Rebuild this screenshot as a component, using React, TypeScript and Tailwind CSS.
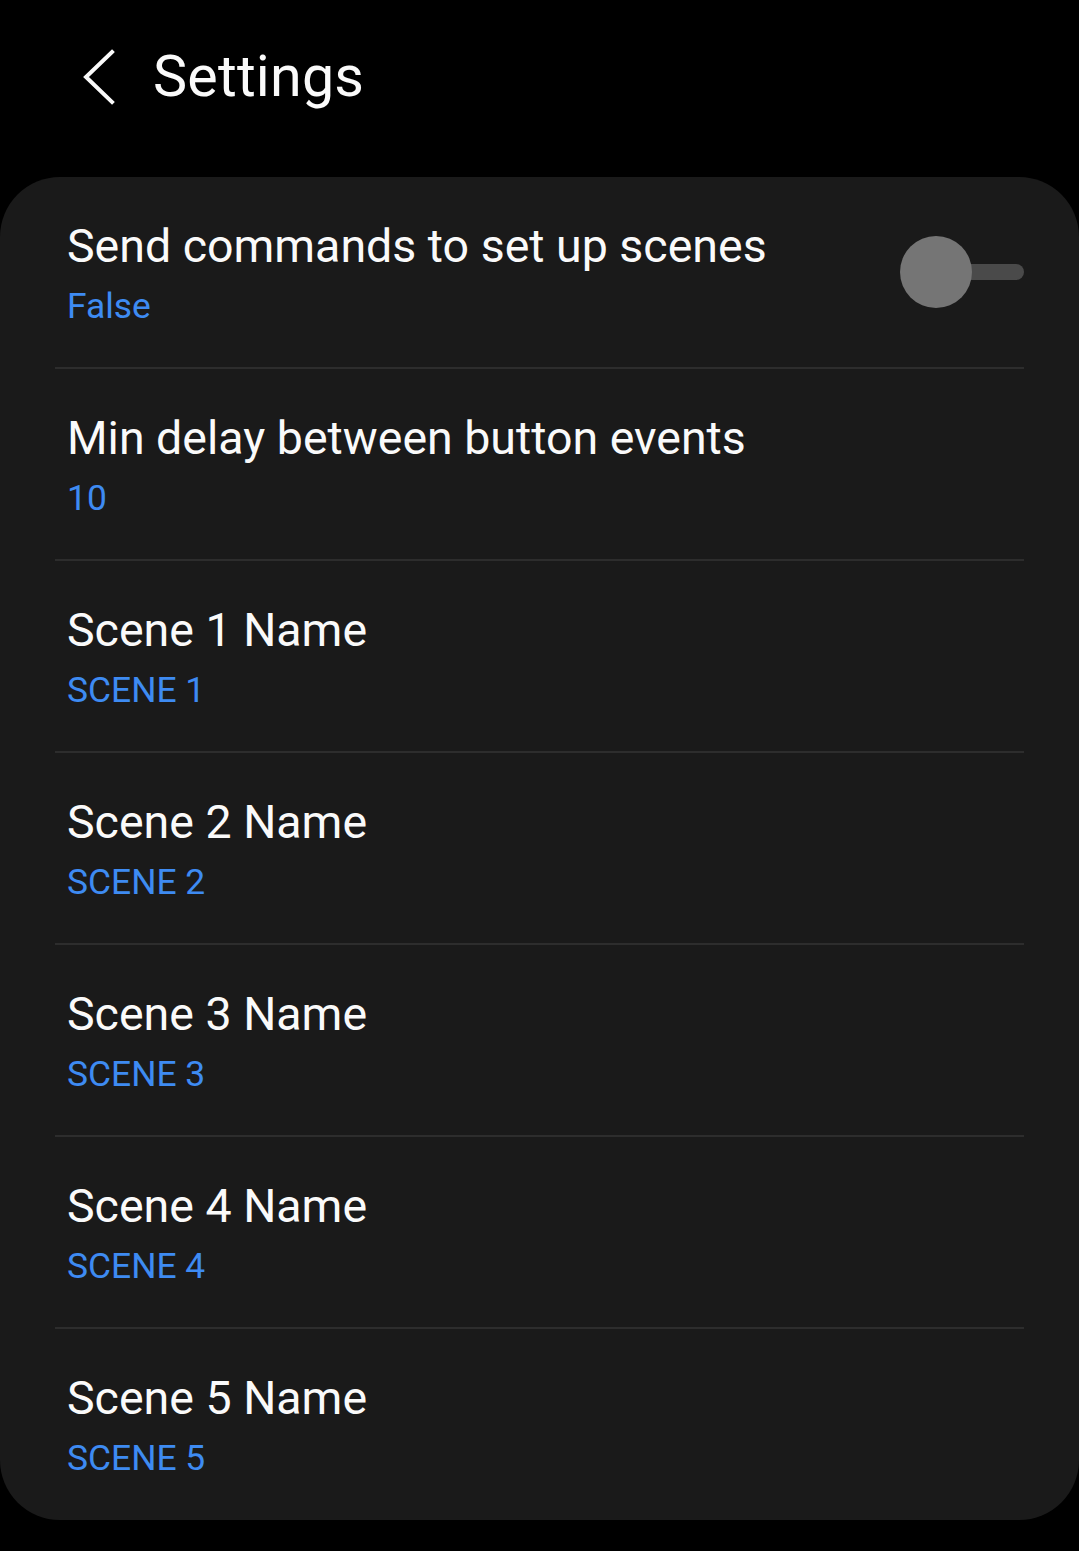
const rows = [
  { title: 'Send commands to set up scenes', value: 'False', toggle: true },
  { title: 'Min delay between button events', value: '10' },
  { title: 'Scene 1 Name', value: 'SCENE 1' },
  { title: 'Scene 2 Name', value: 'SCENE 2' },
  { title: 'Scene 3 Name', value: 'SCENE 3' },
  { title: 'Scene 4 Name', value: 'SCENE 4' },
  { title: 'Scene 5 Name', value: 'SCENE 5' },
]

const Toggle = () => (
  <div className="relative flex h-[72px] w-[124px] items-center">
    <div className="absolute right-0 h-4 w-[80px] rounded-full bg-[#4a4a4a]" />
    <div className="absolute left-0 h-[72px] w-[72px] rounded-full bg-[#757575]" />
  </div>
)

export default function App() {
  return (
    <div className="min-h-[1551px] bg-black font-['Roboto',sans-serif] text-[#fafafa]">
      <header className="flex h-[177px] items-start pt-[45px]">
        <button className="ml-[80px] flex h-[64px] w-[40px] items-center">
          <svg width="36" height="56" viewBox="0 0 36 56" fill="none">
            <path d="M32 3 L6 28 L32 53" stroke="#fafafa" strokeWidth="4" strokeLinecap="square" />
          </svg>
        </button>
        <h1 className="ml-[33px] text-[57.4px] leading-[64px] tracking-[0.2px]">Settings</h1>
      </header>
      <section className="rounded-[60px] bg-[#1a1a1a] px-[55px] pb-[1px]">
        {rows.map((row, i) => (
          <div
            key={row.title}
            className={`flex items-center justify-between ${i > 0 ? 'h-[192px] border-t-2 border-[#2d2d2d]' : 'h-[190px]'}`}
          >
            <div className="flex flex-col pl-[12px] pt-[7px]">
              <span className="text-[46.5px] leading-[60px]">{row.title}</span>
              <span className="text-[35.4px] leading-[60px] text-[#3e8bf2]">{row.value}</span>
            </div>
            {row.toggle && <Toggle />}
          </div>
        ))}
      </section>
    </div>
  )
}
